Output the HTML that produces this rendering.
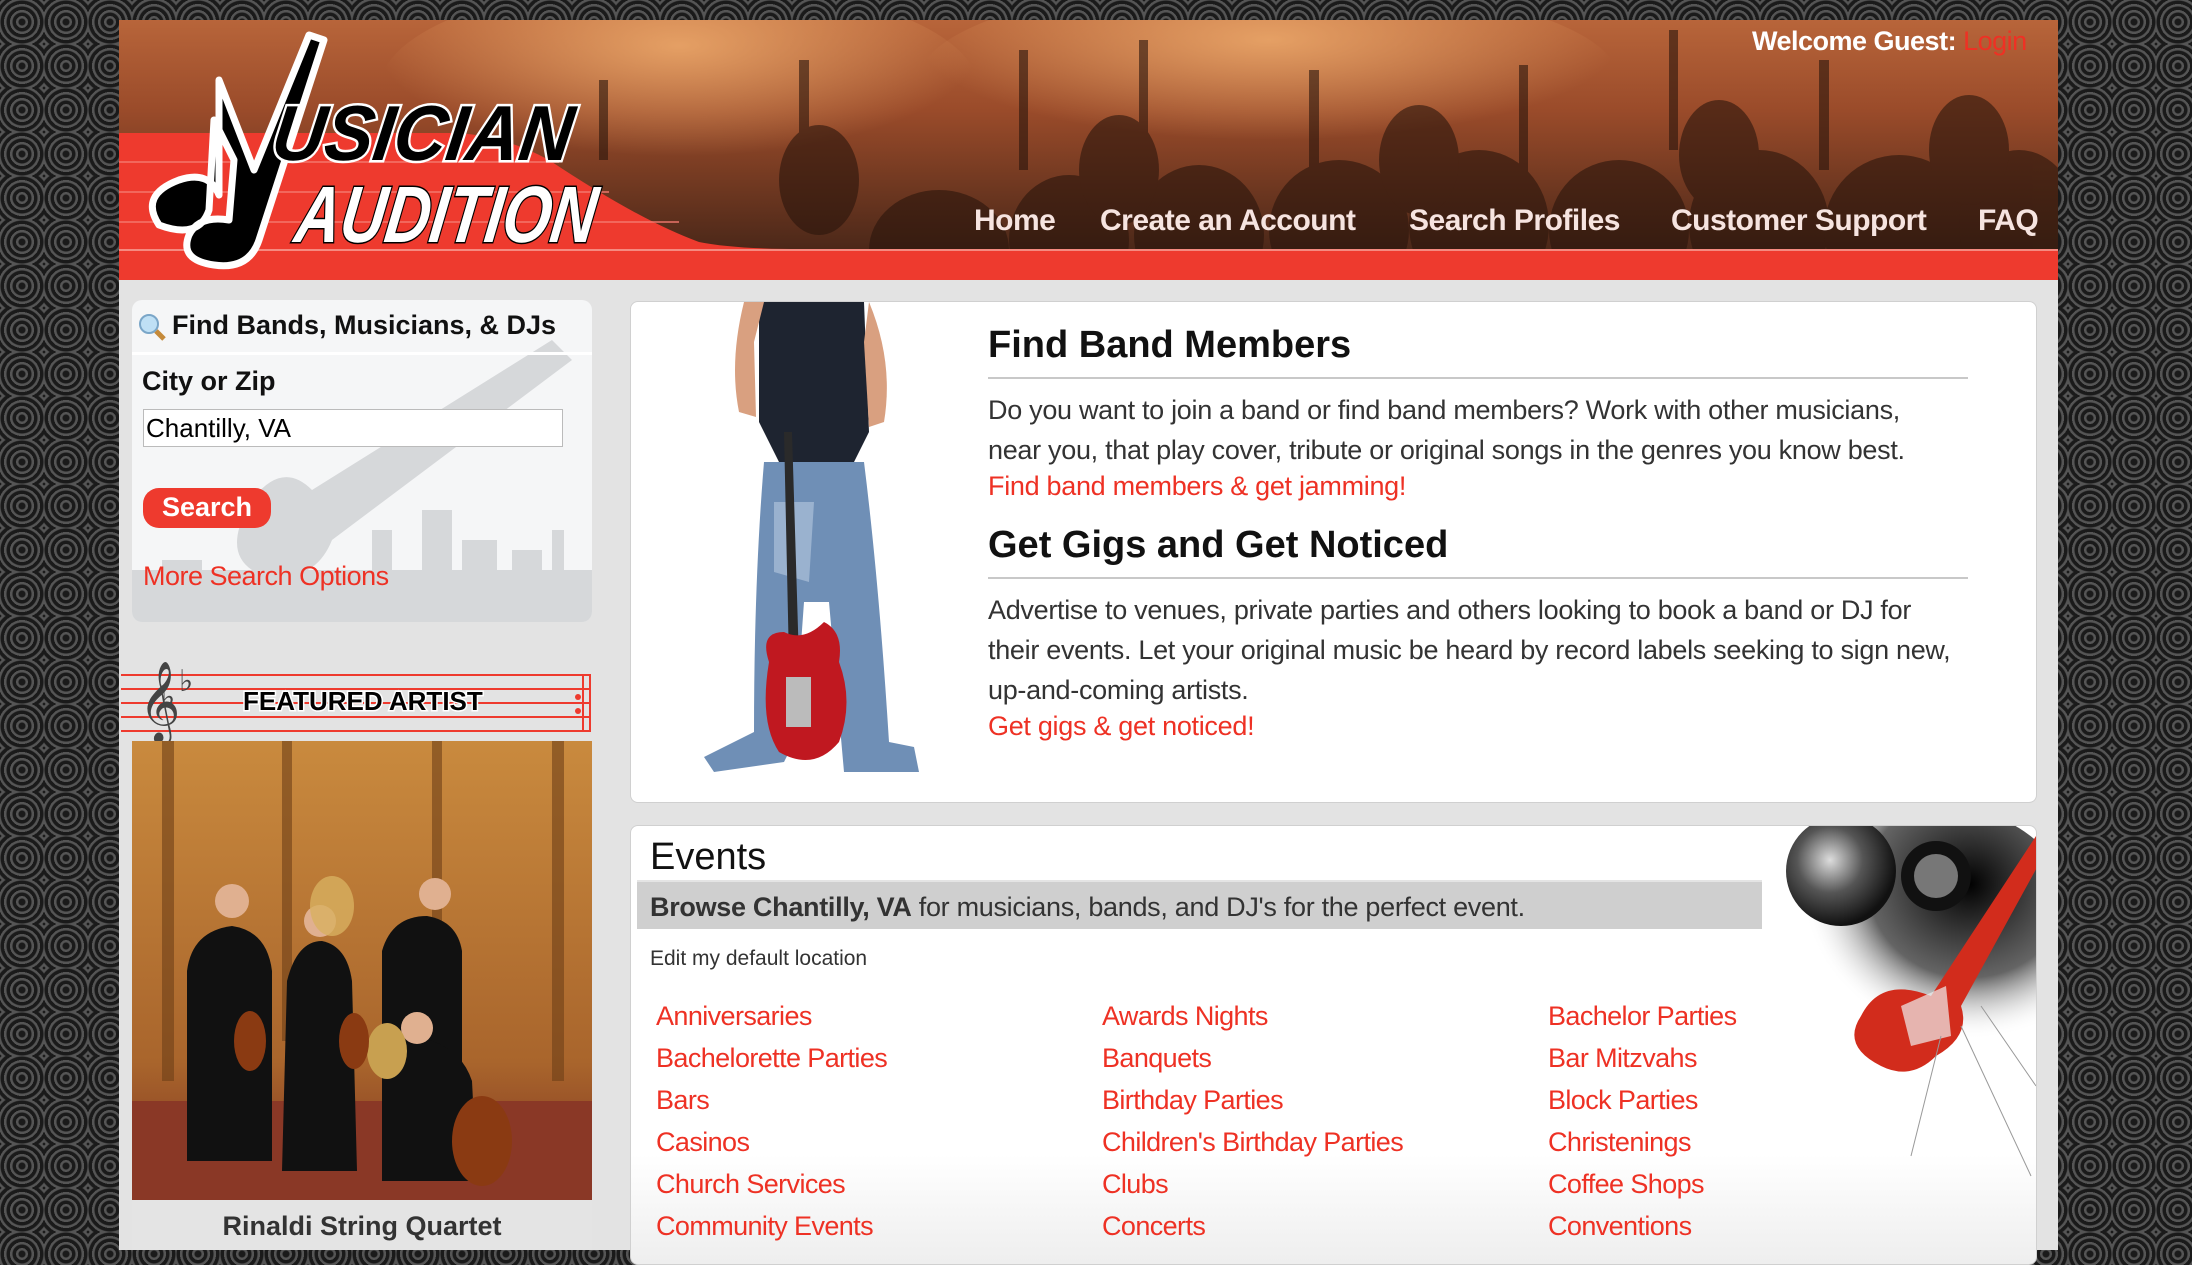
<!DOCTYPE html>
<html><head><meta charset="utf-8">
<style>
*{margin:0;padding:0;box-sizing:border-box}
body{width:2192px;height:1250px;overflow:hidden;font-family:"Liberation Sans",sans-serif;
background-color:#1c1c1c;
background-image:repeating-radial-gradient(circle at 50% 50%,#1a1a1a 0,#1a1a1a 3px,#555 4px,#555 6px);
background-size:44px 44px;position:relative}
.abs{position:absolute}
#wrap{position:absolute;left:119px;top:20px;width:1939px;height:1230px;background:#e3e3e3}
a{color:#ee3124;text-decoration:none}
.nav{position:absolute;top:204px;font-weight:bold;font-size:30px;color:#f6e4e0;letter-spacing:-0.5px}
.p{position:absolute;left:988px;font-size:27px;color:#333;line-height:40px;letter-spacing:-0.3px}
.h{position:absolute;left:988px;font-size:38px;font-weight:bold;color:#111}
.ln{position:absolute;left:988px;width:980px;height:2px;background:#c8c8c8}
.ev{position:absolute;font-size:27px;color:#ee3124;letter-spacing:-0.6px}
</style></head><body>
<div id="wrap"></div>
<!-- header -->
<svg class="abs" style="left:119px;top:20px" width="1939" height="260" viewBox="0 0 1939 260">
<defs>
<linearGradient id="crowd" x1="0" y1="0" x2="0" y2="1">
<stop offset="0" stop-color="#b8653a"/><stop offset="0.35" stop-color="#9a4b2a"/><stop offset="1" stop-color="#3a2015"/></linearGradient>
<radialGradient id="glow" cx="0.5" cy="0.3" r="0.5"><stop offset="0" stop-color="#f2b070" stop-opacity="0.8"/><stop offset="1" stop-color="#f2b070" stop-opacity="0"/></radialGradient>
</defs>
<rect width="1939" height="260" fill="url(#crowd)"/>
<ellipse cx="560" cy="70" rx="300" ry="110" fill="url(#glow)"/>
<ellipse cx="1150" cy="60" rx="350" ry="100" fill="url(#glow)"/>
<g fill="#2a150c" opacity="0.6">
<ellipse cx="820" cy="230" rx="70" ry="60"/><ellipse cx="950" cy="220" rx="60" ry="65"/><ellipse cx="1080" cy="215" rx="65" ry="70"/>
<ellipse cx="1220" cy="210" rx="70" ry="70"/><ellipse cx="1360" cy="205" rx="70" ry="75"/><ellipse cx="1500" cy="210" rx="70" ry="70"/>
<ellipse cx="1640" cy="205" rx="70" ry="75"/><ellipse cx="1780" cy="210" rx="75" ry="75"/><ellipse cx="1900" cy="205" rx="60" ry="75"/>
<ellipse cx="700" cy="160" rx="40" ry="55"/><ellipse cx="1000" cy="150" rx="40" ry="55"/><ellipse cx="1300" cy="140" rx="40" ry="55"/>
<ellipse cx="1600" cy="135" rx="40" ry="55"/><ellipse cx="1850" cy="130" rx="40" ry="55"/>
<rect x="680" y="40" width="10" height="110"/><rect x="900" y="30" width="9" height="120"/><rect x="1190" y="50" width="10" height="110"/>
<rect x="1400" y="45" width="9" height="110"/><rect x="1700" y="40" width="10" height="110"/><rect x="480" y="60" width="9" height="80"/>
<rect x="1020" y="20" width="9" height="110"/><rect x="1550" y="10" width="9" height="120"/>
</g>
<path d="M0 113 L330 113 Q380 113 430 140 Q520 200 580 222 Q620 230 700 229 L1939 229 L1939 260 L0 260 Z" fill="#ee3a2e"/>
<g stroke="#f47a70" stroke-width="2" opacity="0.7"><line x1="0" y1="142" x2="440" y2="142"/><line x1="0" y1="172" x2="490" y2="172"/><line x1="0" y1="202" x2="560" y2="202"/></g>
<rect x="0" y="229" width="1939" height="31" fill="#ee3a2e"/>
<rect x="0" y="229" width="1939" height="2" fill="#f58a80"/>
<!-- logo -->
<path d="M40 205 Q20 175 60 160 Q90 150 100 175 L100 60 L135 150 L190 15 L205 20 L140 220 Q130 250 95 245 Q60 240 70 215 Q80 195 110 200 L115 140 L95 100 L90 190 Q80 220 40 205 Z" fill="#000" stroke="#fff" stroke-width="7" stroke-linejoin="round"/>
<text x="170" y="140" font-family="Liberation Sans" font-weight="bold" font-style="italic" font-size="78" fill="#000" stroke="#fff" stroke-width="5" paint-order="stroke" textLength="300" lengthAdjust="spacingAndGlyphs" transform="skewX(-8)" >USICIAN</text>
<text x="175" y="222" font-family="Liberation Sans" font-weight="bold" font-style="italic" font-size="80" fill="#fff" stroke="#000" stroke-width="3" paint-order="stroke" textLength="300" lengthAdjust="spacingAndGlyphs" transform="skewX(-8) translate(30,0)">AUDITION</text>
</svg>
<div class="abs" style="left:1752px;top:26px;font-size:27px;font-weight:bold;color:#fff;letter-spacing:-0.5px">Welcome Guest: <span style="color:#ee3124;font-weight:normal">Login</span></div>
<div class="nav" style="left:974px">Home</div>
<div class="nav" style="left:1100px">Create an Account</div>
<div class="nav" style="left:1409px">Search Profiles</div>
<div class="nav" style="left:1671px">Customer Support</div>
<div class="nav" style="left:1978px">FAQ</div>

<!-- left search -->
<div class="abs" style="left:132px;top:300px;width:460px;height:322px;background:#f5f6f7;border-radius:10px;overflow:hidden">
<svg class="abs" style="left:0;top:0" width="460" height="322">
<g fill="#d6d8da"><path d="M120 200 Q150 160 180 190 L420 40 L440 60 L200 240 Q180 290 120 270 Q90 250 120 200 Z"/>
<rect x="0" y="270" width="460" height="52"/><rect x="290" y="210" width="30" height="112"/><rect x="330" y="240" width="35" height="82"/><rect x="240" y="230" width="20" height="92"/><rect x="380" y="250" width="30" height="72"/><rect x="30" y="260" width="40" height="62"/><rect x="420" y="230" width="12" height="92"/></g>
<rect x="0" y="52" width="460" height="3" fill="#fff"/>
</svg>
<div class="abs" style="left:40px;top:10px;font-size:27px;font-weight:bold;color:#111">Find Bands, Musicians, &amp; DJs</div>
<svg class="abs" style="left:5px;top:12px" width="30" height="30"><circle cx="12" cy="12" r="9" fill="#bfe0f5" stroke="#7aa6c8" stroke-width="2"/><line x1="19" y1="19" x2="27" y2="27" stroke="#c58a3a" stroke-width="5"/></svg>
<div class="abs" style="left:10px;top:66px;font-size:27px;font-weight:bold;color:#111">City or Zip</div>
<div class="abs" style="left:11px;top:109px;width:420px;height:38px;background:#fff;border:1px solid #bbb;font-size:26px;padding-left:2px;line-height:36px;color:#000">Chantilly, VA</div>
<div class="abs" style="left:11px;top:188px;width:128px;height:40px;background:#ee3a2e;border-radius:16px;color:#fff;font-weight:bold;font-size:27px;text-align:center;line-height:39px">Search</div>
<div class="abs" style="left:11px;top:261px;font-size:27px;color:#ee3124;letter-spacing:-0.5px">More Search Options</div>
</div>
<!-- featured artist -->
<svg class="abs" style="left:121px;top:655px" width="472" height="90">
<g stroke="#ee3a2e" stroke-width="2"><line x1="0" y1="20" x2="470" y2="20"/><line x1="0" y1="34" x2="470" y2="34"/><line x1="0" y1="48" x2="470" y2="48"/><line x1="0" y1="62" x2="470" y2="62"/><line x1="0" y1="76" x2="470" y2="76"/><line x1="462" y1="20" x2="462" y2="76"/><line x1="469" y1="20" x2="469" y2="76"/></g>
<circle cx="457" cy="42" r="3" fill="#ee3a2e"/><circle cx="457" cy="56" r="3" fill="#ee3a2e"/>
<text x="18" y="70" font-size="70" fill="#444" font-family="DejaVu Sans">𝄞</text>
<text x="40" y="52" font-size="30" fill="#444" font-family="DejaVu Sans">♭</text><text x="58" y="36" font-size="30" fill="#444" font-family="DejaVu Sans">♭</text>
<text x="122" y="55" font-size="26" font-weight="bold" fill="#000" font-family="Liberation Sans" stroke="#fff" stroke-width="3" paint-order="stroke">FEATURED ARTIST</text>
</svg>
<svg class="abs" style="left:132px;top:741px" width="460" height="459">
<defs><linearGradient id="room" x1="0" y1="0" x2="0" y2="1"><stop offset="0" stop-color="#c98a3e"/><stop offset="0.7" stop-color="#a9652c"/><stop offset="1" stop-color="#7a3020"/></linearGradient></defs>
<rect width="460" height="459" fill="url(#room)"/>
<g fill="#6e4018" opacity="0.6"><rect x="30" y="0" width="12" height="340"/><rect x="150" y="0" width="10" height="300"/><rect x="300" y="0" width="10" height="300"/><rect x="420" y="0" width="12" height="340"/></g>
<rect x="0" y="360" width="460" height="99" fill="#8a3826"/>
<g fill="#111"><path d="M55 230 Q60 190 100 185 Q135 190 140 230 L140 420 L55 420 Z"/><path d="M155 240 Q165 200 190 200 Q215 205 220 240 L225 430 L150 430 Z"/>
<path d="M250 210 Q260 175 295 175 Q325 180 330 210 L330 380 L250 380 Z"/><path d="M250 330 Q265 290 300 300 Q330 310 340 340 L345 440 L250 440 Z"/></g>
<g fill="#e0b090"><circle cx="100" cy="160" r="17"/><circle cx="188" cy="180" r="16"/><circle cx="303" cy="153" r="16"/><circle cx="285" cy="287" r="16"/></g>
<ellipse cx="200" cy="165" rx="22" ry="30" fill="#d8b060" opacity="0.8"/>
<ellipse cx="255" cy="310" rx="20" ry="28" fill="#c8a050"/>
<g fill="#8a3a12"><ellipse cx="118" cy="300" rx="16" ry="30"/><ellipse cx="222" cy="300" rx="15" ry="28"/><ellipse cx="350" cy="400" rx="30" ry="45"/></g>
</svg>
<div class="abs" style="left:132px;top:1200px;width:460px;height:50px;background:#e4e4e4;text-align:center;font-size:27px;font-weight:bold;color:#333;line-height:52px">Rinaldi String Quartet</div>

<!-- main panel -->
<div class="abs" style="left:630px;top:301px;width:1407px;height:502px;background:#fff;border:1px solid #d0d0d0;border-radius:8px"></div>
<svg class="abs" style="left:664px;top:302px" width="302" height="485">
<path d="M95 0 L200 0 L205 130 L185 170 L120 170 L95 120 Z" fill="#1e2430"/>
<path d="M80 0 Q65 60 75 110 L92 115 L90 40 L100 0Z" fill="#d9a080"/>
<path d="M205 0 Q230 60 220 120 L205 125 L200 40Z" fill="#d9a080"/>
<path d="M100 160 L200 160 Q215 280 225 440 L250 445 L255 470 L180 470 L165 300 L140 300 L130 440 L120 460 L50 470 L40 455 L90 430 Q90 280 100 160Z" fill="#6f8fb6"/>
<path d="M110 200 L150 200 L145 280 L110 270Z" fill="#9ab2cf"/>
<path d="M120 130 L128 130 L135 360 L125 360Z" fill="#2a2a2a"/>
<path d="M105 360 Q95 330 120 330 Q140 340 160 320 Q180 330 175 360 Q190 400 175 440 Q150 470 115 450 Q95 420 105 360Z" fill="#c01820"/>
<rect x="122" y="375" width="25" height="50" fill="#bbb"/>
</svg>
<div class="h" style="top:324px">Find Band Members</div>
<div class="ln" style="top:377px"></div>
<div class="p" style="top:390px">Do you want to join a band or find band members? Work with other musicians,<br>near you, that play cover, tribute or original songs in the genres you know best.<br><a style="position:relative;top:-4px">Find band members &amp; get jamming!</a></div>
<div class="h" style="top:524px">Get Gigs and Get Noticed</div>
<div class="ln" style="top:577px"></div>
<div class="p" style="top:590px">Advertise to venues, private parties and others looking to book a band or DJ for<br>their events. Let your original music be heard by record labels seeking to sign new,<br>up-and-coming artists.<br><a style="position:relative;top:-4px">Get gigs &amp; get noticed!</a></div>

<!-- events -->
<div class="abs" style="left:630px;top:825px;width:1407px;height:440px;background:linear-gradient(#fff 75%,#eee);border:1px solid #d0d0d0;border-radius:8px;overflow:hidden">
<svg class="abs" style="left:1130px;top:0" width="280" height="360">
<defs><radialGradient id="spl" cx="0.6" cy="0.3" r="0.6"><stop offset="0" stop-color="#000"/><stop offset="0.6" stop-color="#222" stop-opacity="0.7"/><stop offset="1" stop-color="#fff" stop-opacity="0"/></radialGradient>
<radialGradient id="spk" cx="0.4" cy="0.4" r="0.6"><stop offset="0" stop-color="#ddd"/><stop offset="0.5" stop-color="#555"/><stop offset="1" stop-color="#111"/></radialGradient></defs>
<ellipse cx="180" cy="110" rx="140" ry="130" fill="url(#spl)"/>
<circle cx="80" cy="45" r="55" fill="url(#spk)"/><circle cx="175" cy="50" r="35" fill="#111"/><circle cx="175" cy="50" r="22" fill="#777"/>
<path d="M275 10 L170 170 Q120 150 100 190 Q80 220 120 240 Q150 255 175 230 Q210 210 200 180 L285 25Z" fill="#d22c1c"/>
<path d="M140 180 L185 160 L190 210 L150 220Z" fill="#eee" opacity="0.7"/>
<g stroke="#999" stroke-width="1"><line x1="200" y1="200" x2="270" y2="350"/><line x1="180" y1="210" x2="150" y2="330"/><line x1="220" y1="180" x2="275" y2="260"/></g>
</svg>
<div class="abs" style="left:19px;top:10px;font-size:38px;color:#111">Events</div>
<div class="abs" style="left:6px;top:54px;width:1125px;height:49px;background:#cfcfcf;border-top:2px solid #e4e4e4"></div>
<div class="abs" style="left:19px;top:66px;font-size:27px;color:#333;letter-spacing:-0.3px"><b>Browse Chantilly, VA</b> for musicians, bands, and DJ's for the perfect event.</div>
<div class="abs" style="left:19px;top:121px;font-size:21px;color:#333">Edit my default location</div>
</div>
<div class="ev" style="left:656px;top:1001px">Anniversaries</div>
<div class="ev" style="left:656px;top:1043px">Bachelorette Parties</div>
<div class="ev" style="left:656px;top:1085px">Bars</div>
<div class="ev" style="left:656px;top:1127px">Casinos</div>
<div class="ev" style="left:656px;top:1169px">Church Services</div>
<div class="ev" style="left:656px;top:1211px">Community Events</div>
<div class="ev" style="left:1102px;top:1001px">Awards Nights</div>
<div class="ev" style="left:1102px;top:1043px">Banquets</div>
<div class="ev" style="left:1102px;top:1085px">Birthday Parties</div>
<div class="ev" style="left:1102px;top:1127px">Children's Birthday Parties</div>
<div class="ev" style="left:1102px;top:1169px">Clubs</div>
<div class="ev" style="left:1102px;top:1211px">Concerts</div>
<div class="ev" style="left:1548px;top:1001px">Bachelor Parties</div>
<div class="ev" style="left:1548px;top:1043px">Bar Mitzvahs</div>
<div class="ev" style="left:1548px;top:1085px">Block Parties</div>
<div class="ev" style="left:1548px;top:1127px">Christenings</div>
<div class="ev" style="left:1548px;top:1169px">Coffee Shops</div>
<div class="ev" style="left:1548px;top:1211px">Conventions</div>
</body></html>
